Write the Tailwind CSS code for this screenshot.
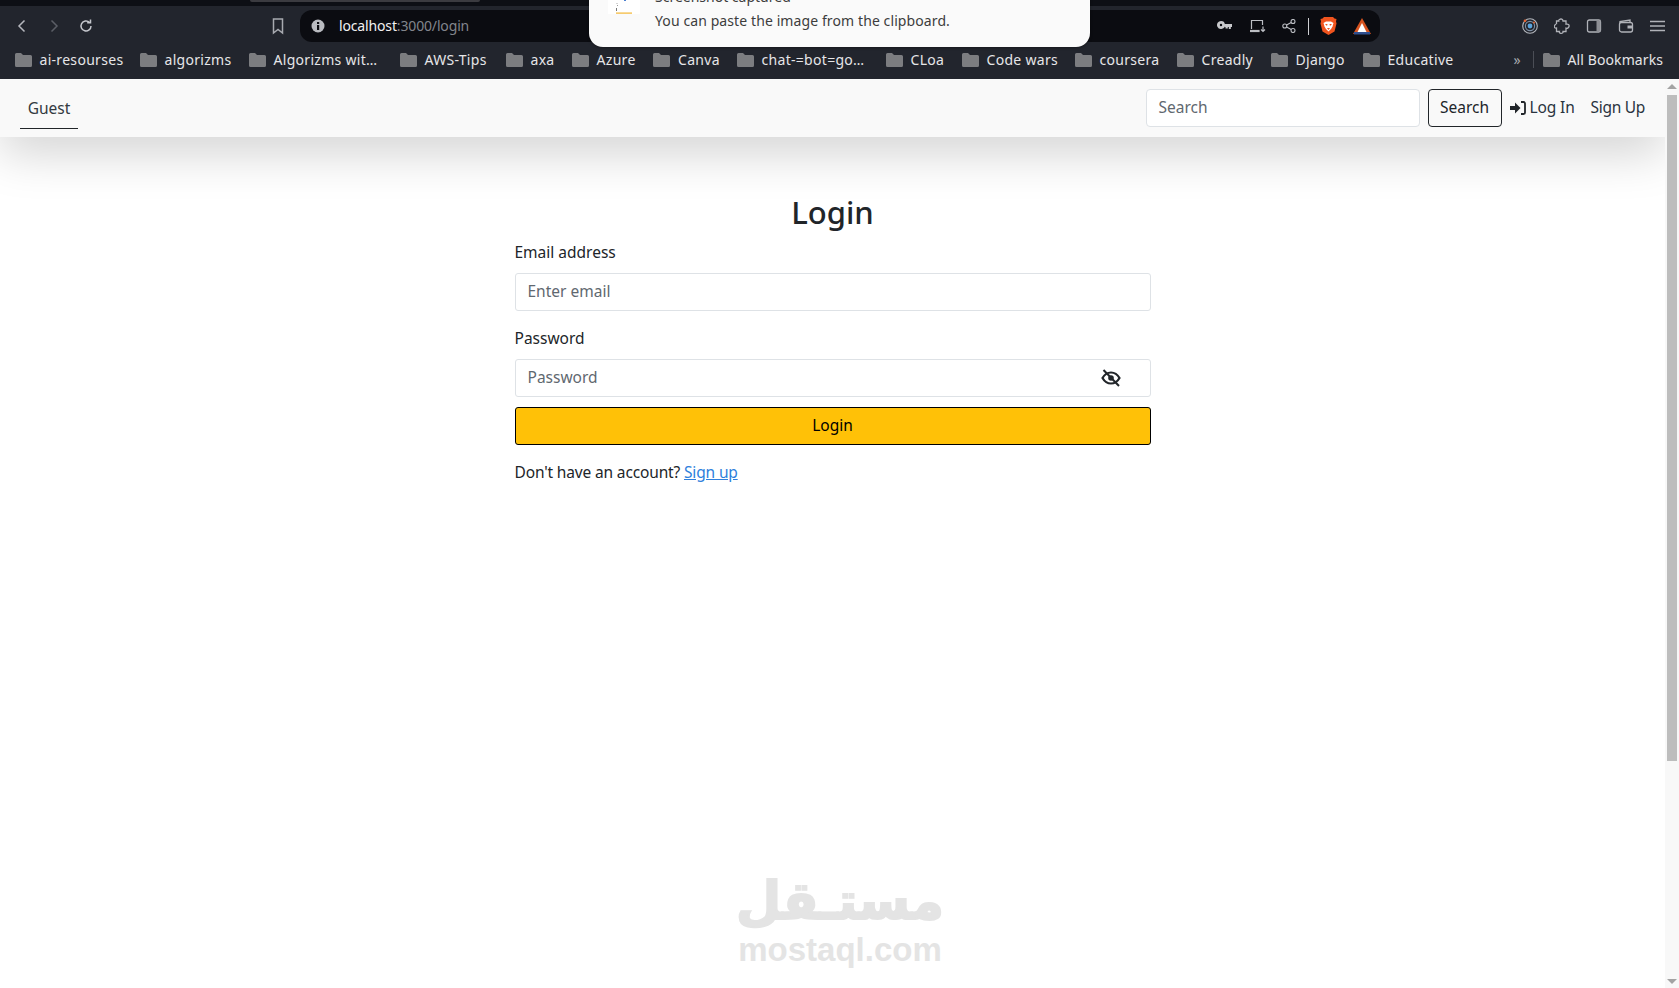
<!DOCTYPE html>
<html>
<head>
<meta charset="utf-8">
<script src="https://cdn.jsdelivr.net/npm/@tailwindcss/browser@4"></script>
<title>Login</title>
</head>
<body class="m-0 overflow-hidden bg-white font-['Noto_Sans','Open_Sans',sans-serif] text-[15.5px] text-[#212529]">
<div class="relative flex h-[988px] w-[1679px] flex-col overflow-hidden">

  <!-- tab strip -->
  <div class="h-[6px] shrink-0 bg-[#0d0f15] pl-[250px]"><div class="h-[2px] w-[230px] rounded-b bg-[#3b3b40]"></div></div>

  <!-- toolbar -->
  <div class="flex h-[36px] shrink-0 items-center bg-[#22252d] pl-[14px] pr-[14px] pt-[4px] text-[#c4c6cc]">
    <svg class="mr-[16px]" width="16" height="16" viewBox="0 0 16 16" fill="none" stroke="#b5b7bd" stroke-width="1.5"><path d="M10.5 2.5 5 8l5.5 5.5"/></svg>
    <svg class="mr-[16px]" width="16" height="16" viewBox="0 0 16 16" fill="none" stroke="#5b5e66" stroke-width="1.5"><path d="M5.5 2.5 11 8l-5.5 5.5"/></svg>
    <svg class="mr-[177px]" width="16" height="16" viewBox="0 0 16 16" fill="none" stroke="#c4c6cc" stroke-width="1.5"><path d="M13 8a5 5 0 1 1-1.6-3.7"/><path d="M12.5 1.5v3.3H9.2" fill="none"/></svg>
    <svg class="mr-[15px]" width="14" height="18" viewBox="0 0 14 18" fill="none" stroke="#a8aab0" stroke-width="1.5"><path d="M2.5 2h9v14L7 12.5 2.5 16z"/></svg>
    <div class="flex h-[32px] w-[1080px] items-center rounded-[12px] bg-[#0b0c11] pl-[11px]">
      <svg width="14" height="14" viewBox="0 0 14 14" class="mr-[14px]"><circle cx="7" cy="7" r="6.5" fill="#b9bbc0"/><rect x="6" y="6" width="2.2" height="5" fill="#0b0c11"/><rect x="6" y="3" width="2.2" height="2" fill="#0b0c11"/></svg>
      <span class="mb-[2px] w-[130px] text-[14px] tracking-[-0.15px] text-[#f2f2f2]">localhost<span class="text-[#82858c]">:3000/login</span></span>
      <div class="ml-[748px] flex items-center">
        <svg class="mr-[18px]" width="15" height="10" viewBox="0 0 15 10" fill="#c8c9cc"><path d="M4 0a4 4 0 1 1-3.6 5.7A4 4 0 0 1 4 0zm0 2.8a1.2 1.2 0 1 0 0 2.4 1.2 1.2 0 0 0 0-2.4z"/><path d="M7.5 3H15v3h-1.2v2h-2V6h-1v1.5H8.5V6h-1z"/></svg>
        <svg class="mr-[16px]" width="16" height="14" viewBox="0 0 16 14" fill="none" stroke="#bcbec3" stroke-width="1.2"><path d="M1.500 10V1.500h11V6"/><path d="M.5 11.500h8.500v1h-8.500z" fill="#bcbec3"/><path d="M13 7.500v5M11 10.500l2 2 2-2"/></svg>
        <svg class="mr-[12px]" width="14" height="14" viewBox="0 0 14 14" fill="none" stroke="#bcbec3" stroke-width="1.1"><circle cx="2.8" cy="7" r="2"/><circle cx="11" cy="2.5" r="2"/><circle cx="11" cy="11.500" r="2"/><path d="M4.600 6 9.200 3.400M4.600 8l4.600 2.600"/></svg>
        <div class="mr-[11px] h-[17px] w-px bg-[#cfd0d3]"></div>
        <svg class="mr-[16px]" width="17" height="18" viewBox="0 0 17 18"><path d="M4 0h9l1.500 1.500L16.500 2 16 4.500l.5 2-2 8-6 3.500-6-3.500-2-8L1 4.500.5 2l2 -.5z" fill="#f0541e"/><path d="M3.500 6 6 4.500h5L13.500 6 12.500 9.500l-1.500 2.500-2.500 2.500L6 12 4.500 9.500z" fill="#fff"/><path d="M5 7h2.500L7 9zM12 7H9.500L10 9z" fill="#f0541e"/><path d="M7 11h3L8.500 13z" fill="#f0541e"/></svg>
        <svg width="18" height="17" viewBox="0 0 18 17"><path d="M9 0 18 16H0z" fill="#d6531f"/><path d="M9 5 13.500 14h-9z" fill="#fff"/><rect x="1" y="14" width="16" height="2.500" fill="#2f4f8f"/></svg>
      </div>
    </div>
    <div class="ml-auto flex items-center gap-[16px]">
      <svg width="16" height="16" viewBox="0 0 16 16" fill="none" stroke="#b5b8be" stroke-width="1.100"><circle cx="8" cy="8" r="7.300"/><circle cx="8" cy="8" r="4.600" stroke="#7f8fa3"/><circle cx="8" cy="8" r="2.400" fill="#5ba3dc" stroke="none"/><circle cx="3" cy="2.800" r="1.300" fill="#e8622c" stroke="none"/><circle cx="12" cy="4.500" r="1" fill="#e8622c" stroke="none"/></svg>
      <svg width="16" height="16" viewBox="0 0 16 16" fill="none" stroke="#b0b2b8" stroke-width="1.300"><path d="M5.500 1.500c1.500-1 3.500-.3 3.500 1.500h3v3.200c2 -.6 3.500.6 3 2.300s-2 2.200-3 1.700V13.500H9c.3 1.500-1 2-2.200 1.800S5 14 5.300 13.500H2.500V10C.5 10.300-.3 8.500.8 7.200S2.500 6 2.500 6.300V3h2.200c-.2-.6.2-1.100.8-1.500z"/></svg>
      <svg width="16" height="16" viewBox="0 0 16 16" fill="none" stroke="#b0b2b8" stroke-width="1.300"><rect x="1.500" y="2" width="13" height="12" rx="1.800"/><rect x="10.500" y="2.500" width="4" height="11" fill="#8d8f95" stroke="none"/></svg>
      <svg width="16" height="16" viewBox="0 0 16 16" fill="none" stroke="#b0b2b8" stroke-width="1.300"><path d="M2 5V3.500L12 2v2.500"/><rect x="1.500" y="4.500" width="13" height="9.500" rx="2"/><rect x="9.500" y="7.500" width="5" height="3" fill="#b0b2b8" stroke="none"/></svg>
      <svg width="15" height="16" viewBox="0 0 15 16" stroke="#b0b2b8" stroke-width="1.400"><path d="M0 3.500h15M0 8h15M0 12.500h15"/></svg>
    </div>
  </div>

  <!-- bookmarks -->
  <div class="flex h-[37px] shrink-0 items-center bg-[#22252d] pb-[2px] pl-[14.5px] text-[14px] tracking-[0.3px] text-[#e6e6e8]">
    <a class="flex w-[125px] items-center gap-[8px] whitespace-nowrap"><svg width="17" height="14" viewBox="0 0 17 14"><path d="M0 1.500A1.500 1.500 0 0 1 1.500 0h4.500l2 2h7.500A1.500 1.500 0 0 1 17 3.500v9a1.500 1.500 0 0 1-1.500 1.500h-14A1.500 1.500 0 0 1 0 12.500z" fill="#7c7d80"/></svg>ai-resourses</a>
    <a class="flex w-[109px] items-center gap-[8px] whitespace-nowrap"><svg width="17" height="14" viewBox="0 0 17 14"><path d="M0 1.500A1.500 1.500 0 0 1 1.500 0h4.500l2 2h7.500A1.500 1.500 0 0 1 17 3.500v9a1.500 1.500 0 0 1-1.500 1.500h-14A1.500 1.500 0 0 1 0 12.500z" fill="#7c7d80"/></svg>algorizms</a>
    <a class="flex w-[151px] items-center gap-[8px] whitespace-nowrap"><svg width="17" height="14" viewBox="0 0 17 14"><path d="M0 1.500A1.500 1.500 0 0 1 1.500 0h4.500l2 2h7.500A1.500 1.500 0 0 1 17 3.500v9a1.500 1.500 0 0 1-1.500 1.500h-14A1.500 1.500 0 0 1 0 12.500z" fill="#7c7d80"/></svg>Algorizms wit…</a>
    <a class="flex w-[106px] items-center gap-[8px] whitespace-nowrap"><svg width="17" height="14" viewBox="0 0 17 14"><path d="M0 1.500A1.500 1.500 0 0 1 1.500 0h4.500l2 2h7.500A1.500 1.500 0 0 1 17 3.500v9a1.500 1.500 0 0 1-1.500 1.500h-14A1.500 1.500 0 0 1 0 12.500z" fill="#7c7d80"/></svg>AWS-Tips</a>
    <a class="flex w-[66px] items-center gap-[8px] whitespace-nowrap"><svg width="17" height="14" viewBox="0 0 17 14"><path d="M0 1.500A1.500 1.500 0 0 1 1.500 0h4.500l2 2h7.500A1.500 1.500 0 0 1 17 3.500v9a1.500 1.500 0 0 1-1.500 1.500h-14A1.500 1.500 0 0 1 0 12.500z" fill="#7c7d80"/></svg>axa</a>
    <a class="flex w-[81.500px] items-center gap-[8px] whitespace-nowrap"><svg width="17" height="14" viewBox="0 0 17 14"><path d="M0 1.500A1.500 1.500 0 0 1 1.500 0h4.500l2 2h7.500A1.500 1.500 0 0 1 17 3.500v9a1.500 1.500 0 0 1-1.500 1.500h-14A1.500 1.500 0 0 1 0 12.500z" fill="#7c7d80"/></svg>Azure</a>
    <a class="flex w-[83.500px] items-center gap-[8px] whitespace-nowrap"><svg width="17" height="14" viewBox="0 0 17 14"><path d="M0 1.500A1.500 1.500 0 0 1 1.500 0h4.500l2 2h7.500A1.500 1.500 0 0 1 17 3.500v9a1.500 1.500 0 0 1-1.500 1.500h-14A1.500 1.500 0 0 1 0 12.500z" fill="#7c7d80"/></svg>Canva</a>
    <a class="flex w-[149px] items-center gap-[8px] whitespace-nowrap"><svg width="17" height="14" viewBox="0 0 17 14"><path d="M0 1.500A1.500 1.500 0 0 1 1.500 0h4.500l2 2h7.500A1.500 1.500 0 0 1 17 3.500v9a1.500 1.500 0 0 1-1.500 1.500h-14A1.500 1.500 0 0 1 0 12.500z" fill="#7c7d80"/></svg>chat-=bot=go…</a>
    <a class="flex w-[76px] items-center gap-[8px] whitespace-nowrap"><svg width="17" height="14" viewBox="0 0 17 14"><path d="M0 1.500A1.500 1.500 0 0 1 1.500 0h4.500l2 2h7.500A1.500 1.500 0 0 1 17 3.500v9a1.500 1.500 0 0 1-1.500 1.500h-14A1.500 1.500 0 0 1 0 12.500z" fill="#7c7d80"/></svg>CLoa</a>
    <a class="flex w-[113px] items-center gap-[8px] whitespace-nowrap"><svg width="17" height="14" viewBox="0 0 17 14"><path d="M0 1.500A1.500 1.500 0 0 1 1.500 0h4.500l2 2h7.500A1.500 1.500 0 0 1 17 3.500v9a1.500 1.500 0 0 1-1.500 1.500h-14A1.500 1.500 0 0 1 0 12.500z" fill="#7c7d80"/></svg>Code wars</a>
    <a class="flex w-[102px] items-center gap-[8px] whitespace-nowrap"><svg width="17" height="14" viewBox="0 0 17 14"><path d="M0 1.500A1.500 1.500 0 0 1 1.500 0h4.500l2 2h7.500A1.500 1.500 0 0 1 17 3.500v9a1.500 1.500 0 0 1-1.500 1.500h-14A1.500 1.500 0 0 1 0 12.500z" fill="#7c7d80"/></svg>coursera</a>
    <a class="flex w-[94px] items-center gap-[8px] whitespace-nowrap"><svg width="17" height="14" viewBox="0 0 17 14"><path d="M0 1.500A1.500 1.500 0 0 1 1.500 0h4.500l2 2h7.500A1.500 1.500 0 0 1 17 3.500v9a1.500 1.500 0 0 1-1.500 1.500h-14A1.500 1.500 0 0 1 0 12.500z" fill="#7c7d80"/></svg>Creadly</a>
    <a class="flex w-[92px] items-center gap-[8px] whitespace-nowrap"><svg width="17" height="14" viewBox="0 0 17 14"><path d="M0 1.500A1.500 1.500 0 0 1 1.500 0h4.500l2 2h7.500A1.500 1.500 0 0 1 17 3.500v9a1.500 1.500 0 0 1-1.500 1.500h-14A1.500 1.500 0 0 1 0 12.500z" fill="#7c7d80"/></svg>Django</a>
    <a class="flex w-[151px] items-center gap-[8px] whitespace-nowrap"><svg width="17" height="14" viewBox="0 0 17 14"><path d="M0 1.500A1.500 1.500 0 0 1 1.500 0h4.500l2 2h7.500A1.500 1.500 0 0 1 17 3.500v9a1.500 1.500 0 0 1-1.500 1.500h-14A1.500 1.500 0 0 1 0 12.500z" fill="#7c7d80"/></svg>Educative</a>
    <span class="w-[19px] text-[14px] text-[#a8aaaf]">»</span>
    <div class="mr-[9px] h-[17px] w-px bg-[#4b4e56]"></div>
    <a class="flex items-center gap-[8px] whitespace-nowrap tracking-[0.1px]"><svg width="17" height="14" viewBox="0 0 17 14"><path d="M0 1.500A1.500 1.500 0 0 1 1.500 0h4.500l2 2h7.500A1.500 1.500 0 0 1 17 3.500v9a1.500 1.500 0 0 1-1.500 1.500h-14A1.500 1.500 0 0 1 0 12.500z" fill="#7c7d80"/></svg>All Bookmarks</a>
  </div>

  <!-- page + scrollbar -->
  <div class="flex min-h-0 flex-1">
    <div class="flex min-w-0 flex-1 flex-col overflow-hidden bg-white">
      <nav class="relative z-10 flex h-[58px] shrink-0 items-center bg-[#f9f9f9] pl-[20px] pr-[20px] shadow-[0_16px_48px_rgba(0,0,0,0.175)]">
        <a class="mb-[8px] flex h-[39px] w-[58px] items-center justify-center self-end border-b border-[#212529] pb-[1px] text-[#333a41]">Guest</a>
        <div class="ml-auto flex items-center">
          <div class="flex h-[38px] w-[274px] items-center rounded-[4px] border border-[#dee2e6] bg-white px-[12px] text-[#5f6870]">Search</div>
          <button class="ml-[8px] h-[38px] w-[74px] rounded-[4px] border border-[#212529] text-[#212529]">Search</button>
          <svg class="ml-[8px]" width="16" height="14" viewBox="0 0 16 14"><path d="M0 5h5V1.500l5.500 5.500L5 12.500V9H0z" fill="#212529"/><path d="M11 1h2.500A1.500 1.500 0 0 1 15 2.500v9a1.500 1.500 0 0 1-1.500 1.500H11" fill="none" stroke="#212529" stroke-width="1.800"/></svg>
          <a class="ml-[4px] tracking-[-0.15px] text-[#2a3440]">Log In</a>
          <a class="ml-[16px] tracking-[-0.3px] text-[#2a3440]">Sign Up</a>
        </div>
      </nav>
      <main class="mx-auto flex w-[636px] flex-col pt-[57px]">
        <h2 class="mb-[10px] text-center text-[31px] leading-[36px] font-medium text-[#212529]">Login</h2>
        <label class="mb-[9px] leading-[24px]">Email address</label>
        <div class="flex h-[38px] items-center rounded-[3px] border border-[#dee2e6] bg-white px-[12px] text-[#5f6870]">Enter email</div>
        <label class="mt-[15px] mb-[9px] leading-[24px]">Password</label>
        <div class="relative flex h-[38px] items-center rounded-[3px] border border-[#dee2e6] bg-white px-[12px] text-[#5f6870]">Password
          <svg class="absolute right-[29px] top-[9px]" width="20" height="18" viewBox="0 0 20 18" fill="none" stroke="#212529"><path d="M1.500 9C3.500 5.500 6.500 3.500 10 3.500S16.500 5.500 18.500 9c-2 3.500-5 5.500-8.500 5.500S3.500 12.500 1.500 9z" stroke-width="2.200"/><circle cx="10" cy="9" r="2.800" fill="#212529" stroke="none"/><path d="M2.500 1 18 17" stroke-width="2" /></svg>
        </div>
        <button class="mt-[10px] h-[38px] rounded-[3px] border border-black bg-[#ffc107] text-black">Login</button>
        <p class="mt-[15px] leading-[24px] tracking-[-0.15px]">Don't have an account? <a class="text-[#2f7fdc] underline">Sign up</a></p>
      </main>
    </div>
    <div class="flex w-[14px] shrink-0 flex-col items-center bg-[#f8f8f8] pt-[5px]">
      <div class="mb-[6px] h-0 w-0 border-x-[5px] border-b-[5px] border-x-transparent border-b-[#a3a3a3]"></div>
      <div class="h-[666px] w-[10px] bg-[#bdbdbd]"></div>
      <div class="mt-auto mb-[4px] h-0 w-0 border-x-[5px] border-t-[5px] border-x-transparent border-t-[#a3a3a3]"></div>
    </div>
  </div>

  <!-- screenshot toast -->
  <div class="absolute left-[589px] top-[-14px] z-20 flex h-[60.500px] w-[501px] rounded-b-[14px] bg-[#fafafa] shadow-[0_1px_3px_rgba(0,0,0,0.35)]">
    <svg class="ml-[19px] mt-[14px]" width="32" height="14" viewBox="0 0 32 14"><rect width="32" height="14" fill="#fff"/><rect x="8" y="12.500" width="16" height="1.200" fill="#f3b632"/><rect x="8" y="8" width="1" height="3" fill="#777"/><rect x="8.500" y="3" width="1" height="1" fill="#aaa"/><rect x="9" y="5" width="1" height="1" fill="#999"/><rect x="16" y="0" width="2" height="1" fill="#4a7fd0"/></svg>
    <div class="ml-[15px] flex flex-col text-[14px] leading-[21px] text-[#3d3d3d]">
      <span class="mb-[3px]">Screenshot captured</span>
      <span class="tracking-[0.1px]">You can paste the image from the clipboard.</span>
    </div>
  </div>

  <!-- watermark -->
  <div class="pointer-events-none absolute left-[735px] top-[866px] z-20 flex w-[210px] flex-col items-center text-[#e4e4e4]">
    <span class="font-['DejaVu_Sans',sans-serif] text-[52px] leading-[70px] font-bold [-webkit-text-stroke:2px_#e4e4e4]">مستـقل</span>
    <span class="mt-[-3px] font-['Liberation_Sans',sans-serif] text-[33px] leading-[34px] font-bold">mostaql.com</span>
  </div>
</div>
</body>
</html>
